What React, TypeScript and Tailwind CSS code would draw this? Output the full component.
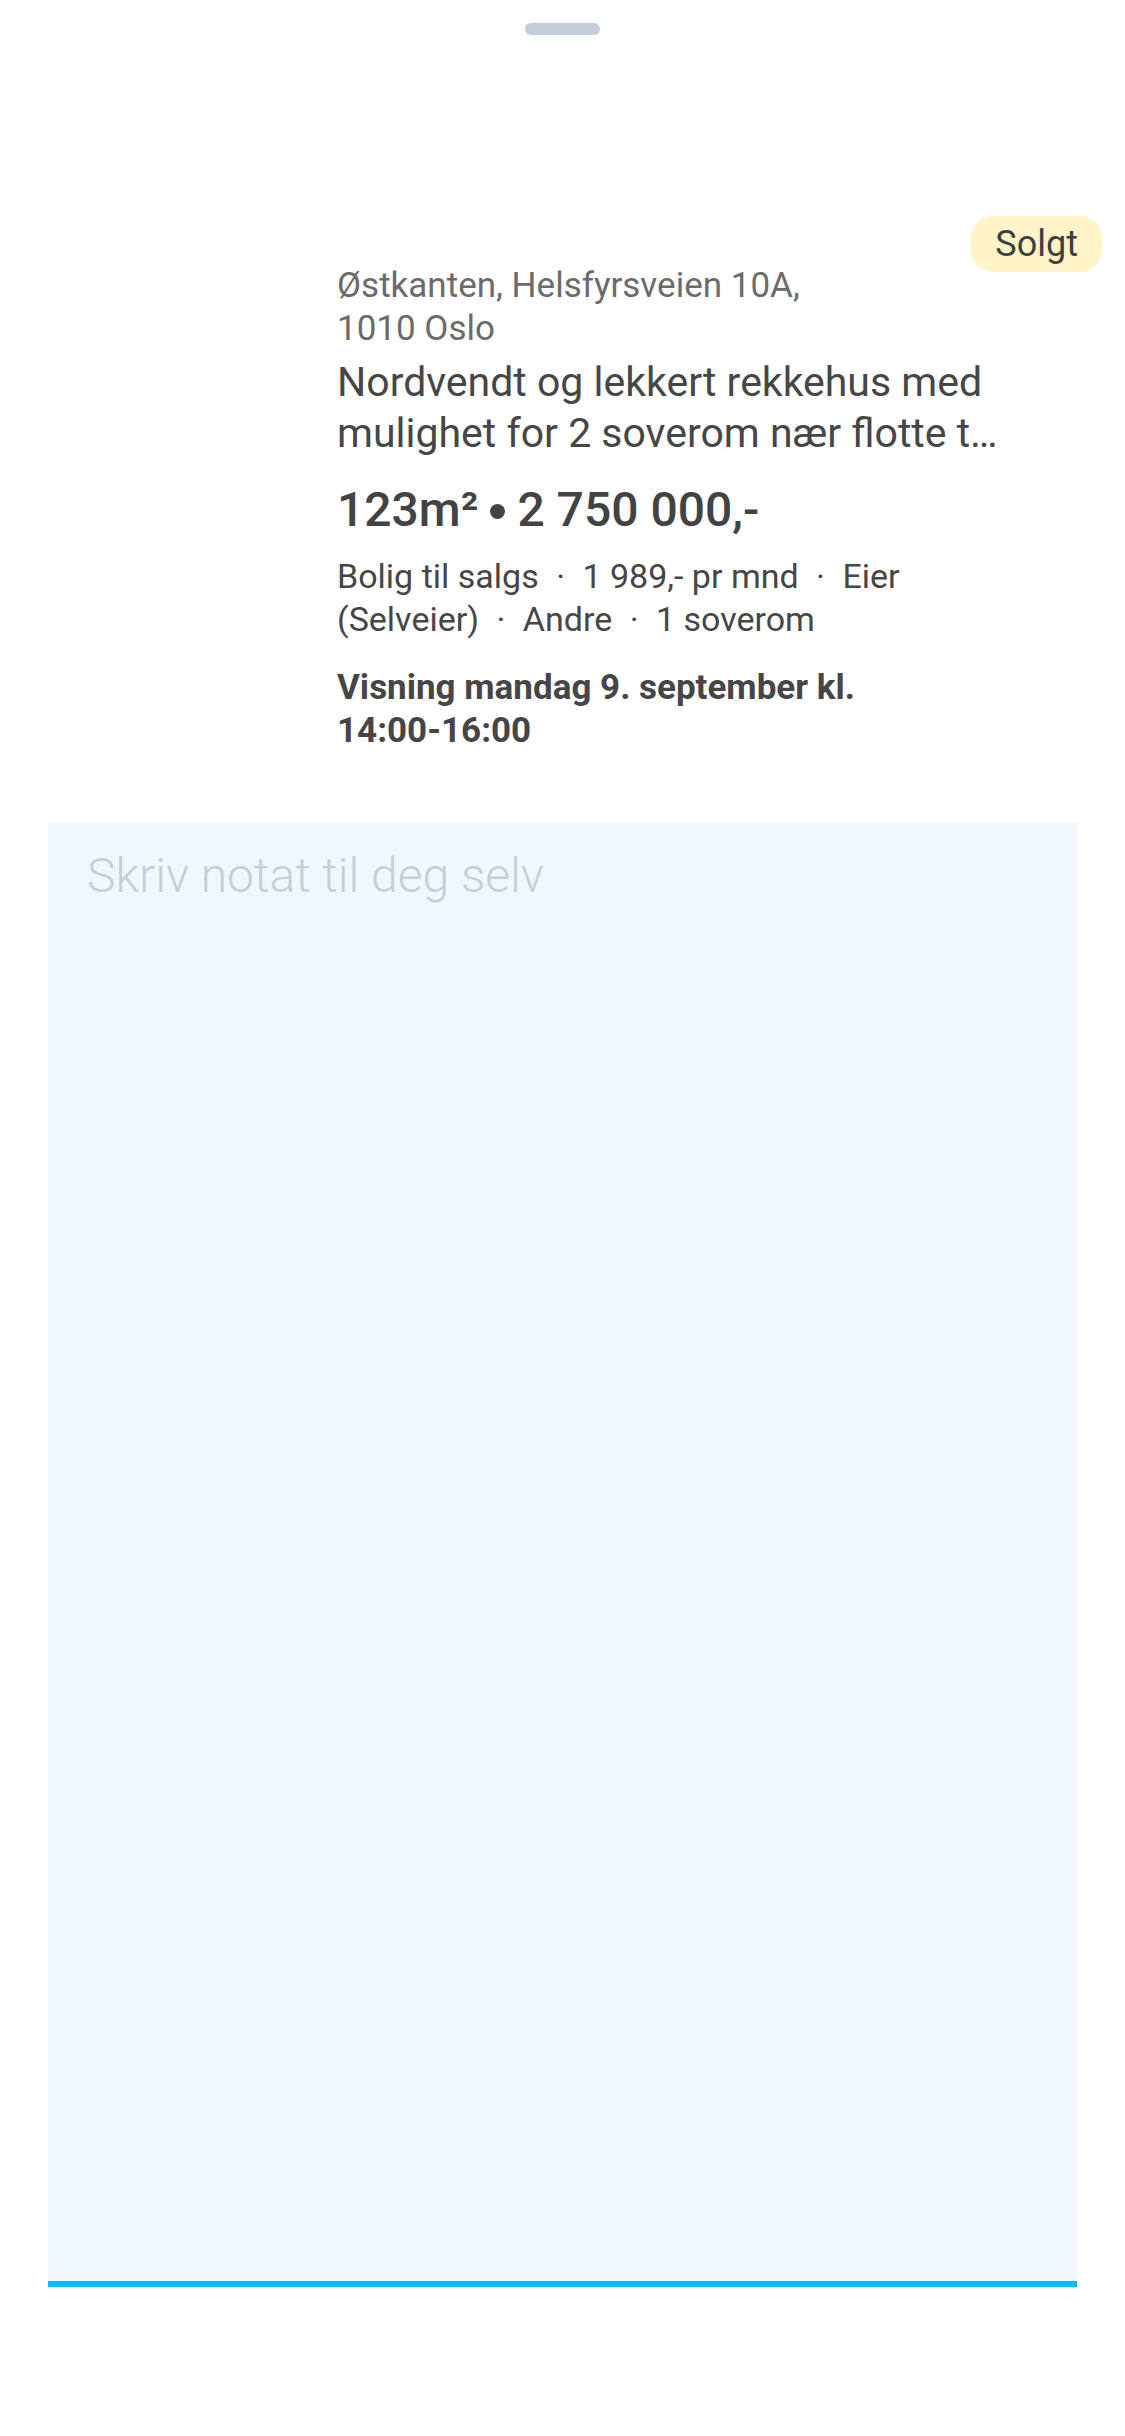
import React, { useState } from "react";

const font = { fontFamily: "Roboto, 'Noto Sans', sans-serif" };

const details = ["Bolig til salgs", "1 989,- pr mnd", "Eier (Selveier)", "Andre", "1 soverom"];

const App: React.FC = () => {
  const [note, setNote] = useState<string>("");

  return (
    <div className="w-[1125px] min-h-[2436px] bg-white" style={font}>
      {/* Drag handle */}
      <div className="flex justify-center pt-[23px]">
        <div className="w-[75px] h-[12px] rounded-full bg-[#c3cdd9]" />
      </div>

      {/* Ad card */}
      <div className="flex mt-[181px] pl-[337px] pr-[23px]">
        <div className="flex-1 flex flex-col">
          <div className="flex justify-end h-[48px]">
            <span className="h-[56px] px-[24px] rounded-[22px] bg-[#fff3c8] text-[#3f3f42] text-[36px] leading-[56px]">
              Solgt
            </span>
          </div>
          <p className="text-[35px] leading-[43px] text-[#6b6b6b] w-[640px]">
            Østkanten, Helsfyrsveien 10A,
            <br />
            1010 Oslo
          </p>
          <div className="mt-[7px] text-[41px] leading-[51px] text-[#464646] w-[666px]">
            <p>Nordvendt og lekkert rekkehus med</p>
            <p className="truncate">mulighet for 2 soverom nær flotte turområder</p>
          </div>
          <p className="mt-[23px] text-[48px] leading-[56px] font-medium text-[#434343]">
            123m²
            <span className="inline-block w-[15px] h-[15px] rounded-full bg-[#434343] align-middle mx-[12px] -mt-[4px]" />
            2 750 000,-
          </p>
          <p className="mt-[17px] text-[34px] leading-[43px] text-[#464646] w-[620px]">
            {details.map((d, i) => (
              <React.Fragment key={d}>
                {i > 0 && <span className="mx-[9px]">·</span>} {d}{" "}
              </React.Fragment>
            ))}
          </p>
          <p className="mt-[25px] text-[35px] leading-[43px] font-bold text-[#464646]">
            Visning mandag 9. september kl.
            <br />
            14:00-16:00
          </p>
        </div>
      </div>

      {/* Note */}
      <div className="px-[48px] mt-[71px]">
        <textarea
          value={note}
          onChange={(e) => setNote(e.target.value)}
          placeholder="Skriv notat til deg selv"
          className="block w-full h-[1464px] resize-none bg-[#f0f7fe] border-b-[6px] border-[#06beff] px-[39px] pt-[23px] text-[48px] leading-[60px] font-light text-[#464646] placeholder:text-[#c5cedb] outline-none"
          style={font}
        />
      </div>
    </div>
  );
};

export default App;
